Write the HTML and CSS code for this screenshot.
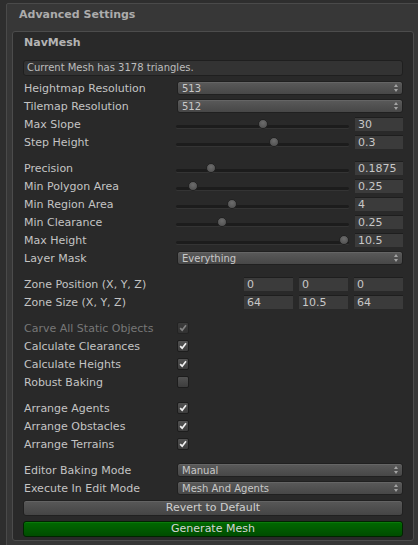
FILE: index.html
```html
<!DOCTYPE html>
<html>
<head>
<meta charset="utf-8">
<link rel="stylesheet" href="styles.css">
</head>
<body>
<div class="outer">
  <div class="outer-title">Advanced Settings</div>
  <div class="panel">
    <div class="panel-title">NavMesh</div>
    <div class="info">Current Mesh has 3178 triangles.</div>

    <div class="row"><span class="label">Heightmap Resolution</span><div class="popup"><span>513</span><svg class="arrows" viewBox="0 0 4 8"><path d="M2 0L4 3H0Z M0 5H4L2 8Z"/></svg></div></div>
    <div class="row"><span class="label">Tilemap Resolution</span><div class="popup"><span>512</span><svg class="arrows" viewBox="0 0 4 8"><path d="M2 0L4 3H0Z M0 5H4L2 8Z"/></svg></div></div>
    <div class="row"><span class="label">Max Slope</span><div class="slider"><div class="rail"></div><div class="thumbs"><span class="thumb" style="left:50%"></span></div></div><div class="field">30</div></div>
    <div class="row"><span class="label">Step Height</span><div class="slider"><div class="rail"></div><div class="thumbs"><span class="thumb" style="left:57%"></span></div></div><div class="field">0.3</div></div>

    <div class="spacer"></div>

    <div class="row"><span class="label">Precision</span><div class="slider"><div class="rail"></div><div class="thumbs"><span class="thumb" style="left:18.4%"></span></div></div><div class="field">0.1875</div></div>
    <div class="row"><span class="label">Min Polygon Area</span><div class="slider"><div class="rail"></div><div class="thumbs"><span class="thumb" style="left:7.4%"></span></div></div><div class="field">0.25</div></div>
    <div class="row"><span class="label">Min Region Area</span><div class="slider"><div class="rail"></div><div class="thumbs"><span class="thumb" style="left:31.3%"></span></div></div><div class="field">4</div></div>
    <div class="row"><span class="label">Min Clearance</span><div class="slider"><div class="rail"></div><div class="thumbs"><span class="thumb" style="left:25.2%"></span></div></div><div class="field">0.25</div></div>
    <div class="row"><span class="label">Max Height</span><div class="slider"><div class="rail"></div><div class="thumbs"><span class="thumb" style="left:100%"></span></div></div><div class="field">10.5</div></div>
    <div class="row"><span class="label">Layer Mask</span><div class="popup"><span>Everything</span><svg class="arrows" viewBox="0 0 4 8"><path d="M2 0L4 3H0Z M0 5H4L2 8Z"/></svg></div></div>

    <div class="spacer"></div>

    <div class="row"><span class="label">Zone Position (X, Y, Z)</span><div class="vec"><div class="field">0</div><div class="field">0</div><div class="field">0</div></div></div>
    <div class="row"><span class="label">Zone Size (X, Y, Z)</span><div class="vec"><div class="field">64</div><div class="field">10.5</div><div class="field">64</div></div></div>

    <div class="spacer"></div>

    <div class="row"><span class="label disabled">Carve All Static Objects</span><span class="check disabled-check"><svg viewBox="0 0 12 12"><path d="M2.6 6.2L5 8.6L9.6 2.6"/></svg></span></div>
    <div class="row"><span class="label">Calculate Clearances</span><span class="check"><svg viewBox="0 0 12 12"><path d="M2.6 6.2L5 8.6L9.6 2.6"/></svg></span></div>
    <div class="row"><span class="label">Calculate Heights</span><span class="check"><svg viewBox="0 0 12 12"><path d="M2.6 6.2L5 8.6L9.6 2.6"/></svg></span></div>
    <div class="row"><span class="label">Robust Baking</span><span class="check"></span></div>

    <div class="spacer"></div>

    <div class="row"><span class="label">Arrange Agents</span><span class="check"><svg viewBox="0 0 12 12"><path d="M2.6 6.2L5 8.6L9.6 2.6"/></svg></span></div>
    <div class="row"><span class="label">Arrange Obstacles</span><span class="check"><svg viewBox="0 0 12 12"><path d="M2.6 6.2L5 8.6L9.6 2.6"/></svg></span></div>
    <div class="row"><span class="label">Arrange Terrains</span><span class="check"><svg viewBox="0 0 12 12"><path d="M2.6 6.2L5 8.6L9.6 2.6"/></svg></span></div>

    <div class="spacer"></div>

    <div class="row"><span class="label">Editor Baking Mode</span><div class="popup"><span>Manual</span><svg class="arrows" viewBox="0 0 4 8"><path d="M2 0L4 3H0Z M0 5H4L2 8Z"/></svg></div></div>
    <div class="row"><span class="label">Execute In Edit Mode</span><div class="popup"><span>Mesh And Agents</span><svg class="arrows" viewBox="0 0 4 8"><path d="M2 0L4 3H0Z M0 5H4L2 8Z"/></svg></div></div>

    <div class="button revert">Revert to Default</div>
    <div class="button generate">Generate Mesh</div>
  </div>
</div>
</body>
</html>
```
FILE: styles.css
```css
html, body {
  margin: 0;
  padding: 0;
  background: #2e2e2e;
  overflow: hidden;
  height: 545px;
}
body {
  padding: 3px 0 0 6px;
  font-family: "DejaVu Sans", "Liberation Sans", sans-serif;
  font-size: 11px;
  color: #c4c4c4;
  box-sizing: border-box;
}
.outer {
  background: #373737;
  border: 1px solid #4a4a4a;
  border-radius: 2px 0 0 0;
  margin-right: -10px;
  padding: 0 15px 20px 5px;
}
.outer-title {
  height: 22px;
  line-height: 22px;
  padding-left: 7px;
  font-weight: bold;
  color: #acacac;
}
.panel {
  margin-top: 5px;
  width: 402px;
  background: #292929;
  border: 1px solid #4c4c4c;
  border-radius: 3px;
  padding: 0 10px 3px 10px;
  box-sizing: border-box;
}
.panel-title {
  height: 22px;
  line-height: 22px;
  padding-left: 1px;
  font-weight: bold;
  color: #b4b4b4;
}
.info {
  margin-top: 6px;
  height: 16px;
  line-height: 14px;
  box-sizing: border-box;
  background: #333333;
  border: 1px solid #1f1f1f;
  border-radius: 3px;
  padding-left: 3px;
  font-size: 10px;
  color: #bdbdbd;
  margin-bottom: 3px;
}
.row {
  display: flex;
  align-items: center;
  height: 18px;
}
.label {
  width: 154px;
  flex: none;
  padding-left: 1px;
  box-sizing: border-box;
  white-space: nowrap;
}
.label.disabled {
  color: #777777;
}
.spacer {
  height: 8px;
}
.popup {
  flex: 1;
  height: 14px;
  box-sizing: border-box;
  display: flex;
  align-items: center;
  justify-content: space-between;
  background: linear-gradient(#5a5a5a, #474747);
  border: 1px solid #202020;
  border-radius: 3px;
  padding: 0 4px 0 4px;
  font-size: 10px;
  color: #c8c8c8;
  box-shadow: inset 0 1px 0 #656565;
}
.arrows {
  width: 4px;
  height: 8px;
  fill: #a4a4a4;
}
.slider {
  flex: 1;
  position: relative;
  height: 14px;
  margin-left: -1px;
  margin-right: 6px;
}
.rail {
  position: absolute;
  left: 0;
  right: 0;
  top: 8px;
  height: 3px;
  border-radius: 2px;
  background: #1c1c1c;
  box-shadow: 0 1px 0 #343434;
}
.thumbs {
  position: absolute;
  left: 5px;
  right: 5px;
  top: 0;
  bottom: 0;
}
.thumb {
  position: absolute;
  top: 2px;
  width: 10px;
  height: 10px;
  margin-left: -5px;
  box-sizing: border-box;
  border-radius: 50%;
  background: radial-gradient(circle at 50% 35%, #6c6c6c, #4c4c4c);
  border: 1px solid #222222;
}
.field {
  width: 48px;
  height: 14px;
  box-sizing: border-box;
  flex: none;
  background: #3b3b3b;
  border-top: 1px solid #1e1e1e;
  line-height: 13px;
  padding-left: 3px;
  color: #c8c8c8;
  white-space: nowrap;
}
.vec {
  flex: 1;
  display: flex;
  justify-content: flex-end;
  gap: 6px;
}
.vec .field {
  width: 49px;
}
.check {
  width: 12px;
  height: 12px;
  margin-left: 0;
  box-sizing: border-box;
  border: 1px solid #1d1d1d;
  border-radius: 2px;
  background: linear-gradient(#525252, #3d3d3d);
  display: flex;
}
.check svg {
  width: 10px;
  height: 10px;
  fill: none;
  stroke: #f0f0f0;
  stroke-width: 2;
}
.disabled-check {
  opacity: 0.45;
}
.button {
  height: 16px;
  box-sizing: border-box;
  border-radius: 3px;
  text-align: center;
  line-height: 14px;
  color: #cfcfcf;
}
.revert {
  margin-top: 3px;
  background: linear-gradient(#585858, #454545);
  border: 1px solid #202020;
  box-shadow: inset 0 1px 0 #636363;
}
.generate {
  margin-top: 5px;
  background: linear-gradient(#006a00, #004c00);
  border: 1px solid #002400;
  box-shadow: inset 0 1px 0 #0a7a0a;
  color: #d6d6d6;
}
```
